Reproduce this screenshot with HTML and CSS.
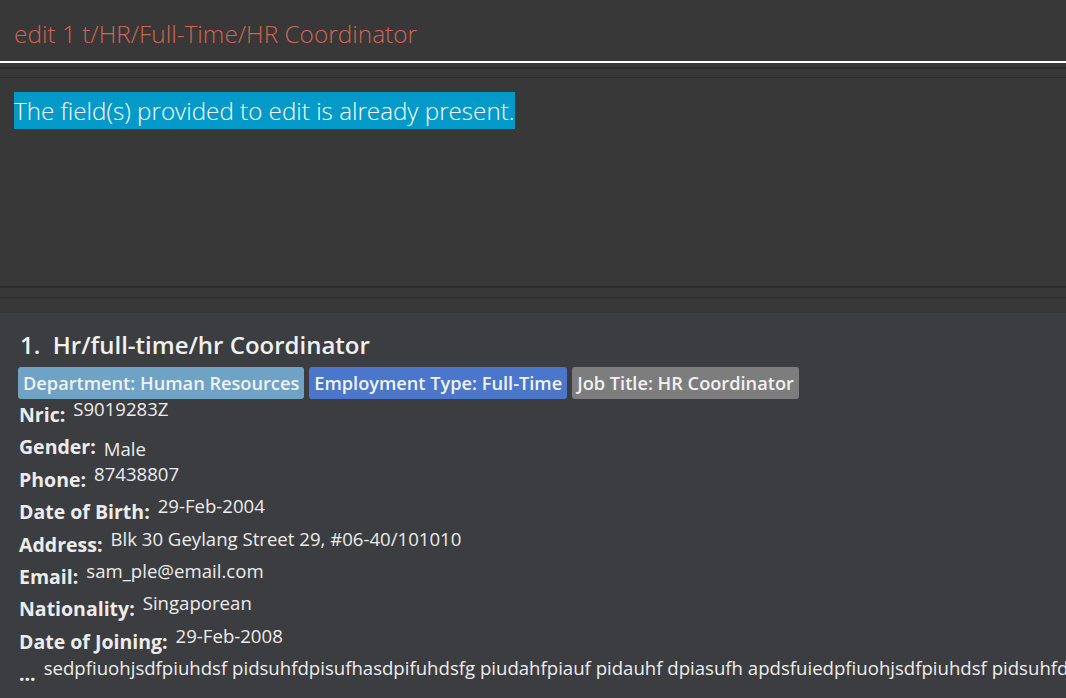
FILE: index.html
```html
<!DOCTYPE html>
<html>
<head>
<meta charset="utf-8">
<link rel="stylesheet" href="styles.css">
</head>
<body>
<div class="app">
  <div class="command">
    <span class="command-text">edit 1 t/HR/Full-Time/HR Coordinator</span>
  </div>
  <div class="divider-band">
    <div class="sep"></div>
  </div>
  <div class="result">
    <span class="result-text">The field(s) provided to edit is already present.</span>
  </div>
  <div class="divider-band lower">
    <div class="sep"></div>
  </div>
  <div class="list">
    <div class="card">
      <div class="name">1.&nbsp; Hr/full-time/hr Coordinator</div>
      <div class="tags">
        <span class="tag dept">Department: Human Resources</span>
        <span class="tag emp">Employment Type: Full-Time</span>
        <span class="tag job">Job Title: HR Coordinator</span>
      </div>
      <div class="field"><span class="label">Nric:</span><span class="value">S9019283Z</span></div>
      <div class="field"><span class="label">Gender:</span><span class="value low">Male</span></div>
      <div class="field"><span class="label">Phone:</span><span class="value">87438807</span></div>
      <div class="field"><span class="label">Date of Birth:</span><span class="value">29-Feb-2004</span></div>
      <div class="field"><span class="label">Address:</span><span class="value">Blk 30 Geylang Street 29, #06-40/101010</span></div>
      <div class="field"><span class="label">Email:</span><span class="value">sam_ple@email.com</span></div>
      <div class="field"><span class="label">Nationality:</span><span class="value">Singaporean</span></div>
      <div class="field"><span class="label">Date of Joining:</span><span class="value">29-Feb-2008</span></div>
      <div class="field"><span class="label">...</span><span class="value">sedpfiuohjsdfpiuhdsf pidsuhfdpisufhasdpifuhdsfg piudahfpiauf pidauhf dpiasufh apdsfuiedpfiuohjsdfpiuhdsf pidsuhfdpisufhasdpifuhdsfg</span></div>
    </div>
  </div>
</div>
</body>
</html>
```

FILE: styles.css
```css
html, body {
  margin: 0;
  padding: 0;
  background: #383838;
  width: 1066px;
  height: 698px;
  overflow: hidden;
}
.app {
  display: flex;
  flex-direction: column;
  height: 698px;
  font-family: "Open Sans", "Noto Sans", sans-serif;
}
.command {
  height: 61px;
  border-bottom: 2px solid #ffffff;
  padding-left: 14px;
  display: flex;
  align-items: center;
  box-sizing: content-box;
}
.command-text {
  color: #d06651;
  font-weight: 300;
  font-size: 24.4px;
  line-height: 30px;
  margin-top: 6px;
}
.divider-band {
  height: 19px;
  display: flex;
  flex-direction: column;
  justify-content: center;
}
.divider-band .sep {
  height: 8px;
  border-top: 2px solid #2c2c2c;
  border-bottom: 1px solid #2c2c2c;
}
.result {
  height: 204px;
  padding: 10px 14px 0;
  box-sizing: border-box;
}
.result-text {
  display: inline-block;
  background: #0399c9;
  color: #ffffff;
  font-weight: 300;
  font-size: 24.2px;
  line-height: 37px;
}
.divider-band.lower {
  height: 27px;
  justify-content: flex-start;
}
.divider-band.lower .sep {
  height: 9px;
}
.list {
  flex: 1;
  background: #3c3d40;
  overflow: hidden;
}
.card {
  padding: 15px 0 0 19px;
  color: #ffffff;
  white-space: nowrap;
}
.name {
  font-size: 24px;
  font-weight: 600;
  color: #f0f0f0;
  line-height: 34px;
  padding-left: 1px;
}
.tags {
  display: flex;
  gap: 5px;
  margin-top: 5px;
  margin-left: -1px;
}
.tag {
  font-size: 18.2px;
  font-weight: 600;
  color: #f2f2f2;
  height: 32px;
  line-height: 32px;
  padding: 0 5px;
  border-radius: 3px;
}
.tag.dept { background: #6ea3c6; }
.tag.emp { background: #4a77cc; }
.tag.job { background: #7d7d7d; }
.field {
  display: flex;
  align-items: flex-start;
  height: 32.4px;
}
.label {
  font-size: 19.5px;
  font-weight: 700;
  color: #ececec;
  line-height: 26px;
  margin-top: 3px;
  margin-right: 8px;
}
.value {
  font-size: 18.6px;
  color: #ececec;
  line-height: 24px;
  margin-top: -2px;
}
.value.low {
  margin-top: 6px;
}
```
